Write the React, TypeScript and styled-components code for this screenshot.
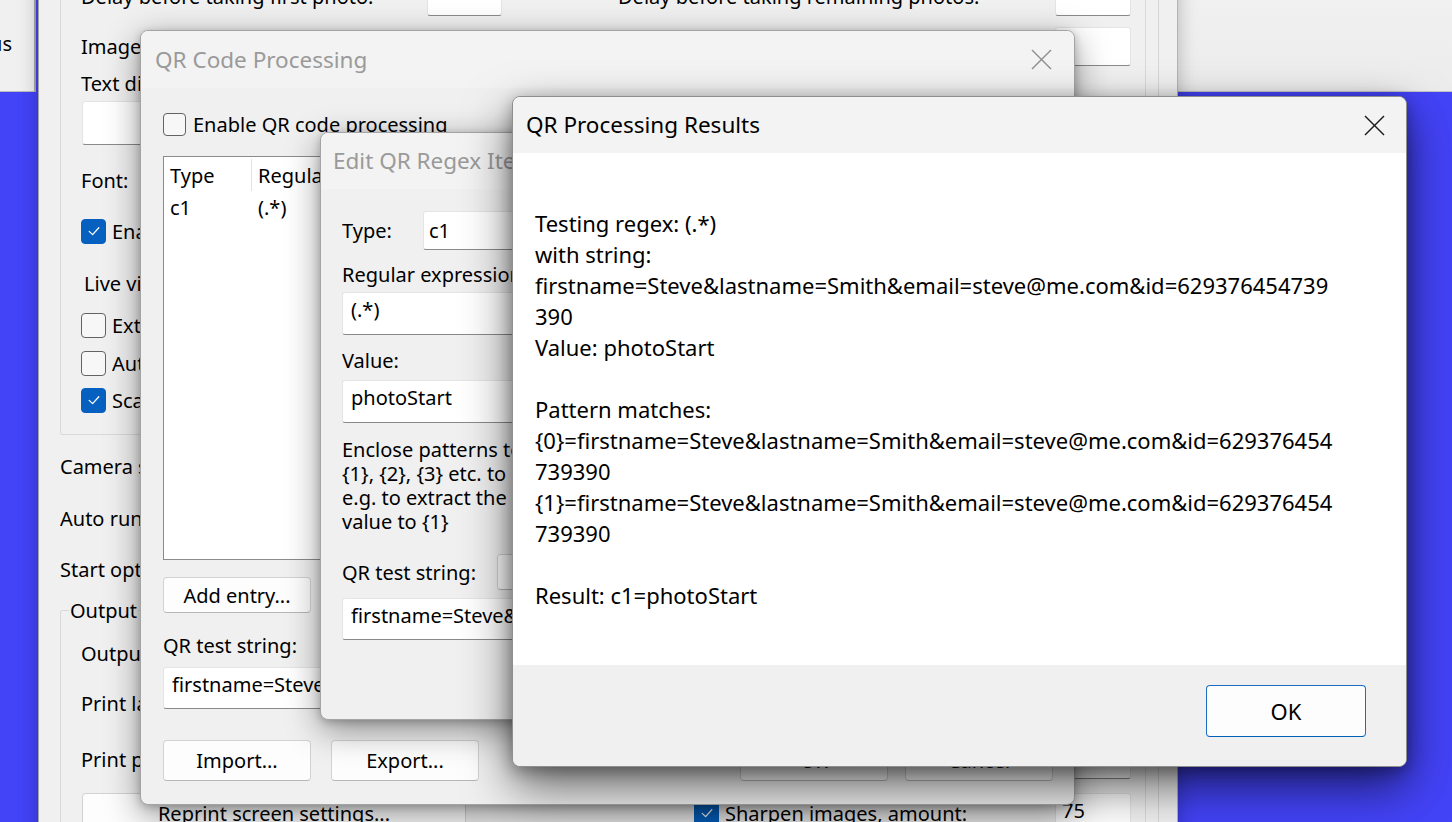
import React from "react";
import styled, { createGlobalStyle } from "styled-components";

const GlobalStyle = createGlobalStyle`
  html, body, #root { margin: 0; padding: 0; }
  body {
    width: 1452px;
    height: 822px;
    overflow: hidden;
    background: #4343f8;
    font-family: "Noto Sans", "Open Sans", sans-serif;
  }
  *, *::before, *::after { box-sizing: border-box; }
`;

const Desktop = styled.div`
  position: relative;
  width: 1452px;
  height: 822px;
  overflow: hidden;
  background: #4343f8;
  font-family: "Noto Sans", "Open Sans", sans-serif;
  font-size: 20px;
  line-height: 27px;
  color: #000;
`;

/* ---------- background windows ---------- */

const LeftWindow = styled.div`
  position: absolute;
  left: -300px;
  top: -10px;
  width: 336px;
  height: 102px;
  z-index: 1;
  display: flex;
  justify-content: flex-end;
  padding: 40px 22px 0 0;
  background: #f0f0f0;
  border-right: 2px solid #a9a9a9;
  border-bottom: 1px solid #bcbcbc;
`;

const RightWindow = styled.div`
  position: absolute;
  left: 1176px;
  top: -10px;
  width: 276px;
  height: 102px;
  z-index: 1;
  background: linear-gradient(180deg, #f1f1f1 0%, #ececec 100%);
  border-left: 2px solid #9d9d9d;
  border-bottom: 1px solid #c4c4c4;
`;

const SettingsWindow = styled.div`
  position: absolute;
  left: 38px;
  top: -40px;
  width: 1140px;
  height: 900px;
  z-index: 2;
  background: #f0f0f0;
  border-left: 1px solid #a3a3a3;
  border-right: 1px solid #b3b3b3;
  box-shadow: 0 0 18px rgba(0, 0, 0, 0.25);
`;

const SettingsPanel = styled.div`
  width: 1120px;
  height: 100%;
  display: flex;
  flex-direction: column;
  padding: 6px 0 0 21px;
  border-right: 1px solid #d6d6d6;
`;

const GroupBox = styled.div`
  width: 1086px;
  flex-shrink: 0;
  display: flex;
  flex-direction: column;
  padding: 9px 14px 21px 20px;
  border: 1px solid #d9d9d9;
  border-radius: 2px;
`;

const OutputGroup = styled.fieldset`
  width: 1086px;
  min-width: 0;
  flex-shrink: 0;
  margin: 10px 0 0 0;
  padding: 0 14px 0 8px;
  border: 1px solid #d9d9d9;
  border-radius: 2px;
`;

const Legend = styled.legend`
  padding: 0 1px;
  font-size: 20px;
  line-height: 27px;
`;

const GroupInner = styled.div`
  display: flex;
  flex-direction: column;
  padding-left: 12px;
`;

/* ---------- generic parts ---------- */

const Row = styled.div<{ $h: number; $mt?: number; $pl?: number; $align?: string }>`
  display: flex;
  align-items: ${(p) => p.$align ?? "center"};
  height: ${(p) => p.$h}px;
  margin-top: ${(p) => p.$mt ?? 0}px;
  padding-left: ${(p) => p.$pl ?? 0}px;
  flex-shrink: 0;
  white-space: nowrap;
`;

const Label = styled.span<{ $w?: number; $ml?: number; $pb?: number }>`
  width: ${(p) => (p.$w ? `${p.$w}px` : "auto")};
  margin-left: ${(p) => p.$ml ?? 0}px;
  padding-bottom: ${(p) => p.$pb ?? 0}px;
  flex-shrink: 0;
  white-space: nowrap;
  overflow: hidden;
`;

const Spacer = styled.div`
  flex: 1;
`;

const Edit = styled.div<{ $w?: number; $h: number; $top?: boolean; $ml?: number; $mt?: number; $pl?: number }>`
  width: ${(p) => (p.$w ? `${p.$w}px` : "100%")};
  height: ${(p) => p.$h}px;
  margin-left: ${(p) => p.$ml ?? 0}px;
  margin-top: ${(p) => p.$mt ?? 0}px;
  flex-shrink: 0;
  display: flex;
  align-items: ${(p) => (p.$top ? "flex-start" : "center")};
  padding: ${(p) => (p.$top ? `3px 8px 0 ${p.$pl ?? 8}px` : `0 8px 0 ${p.$pl ?? 8}px`)};
  background: #ffffff;
  border: 1px solid #e4e4e4;
  border-bottom-color: #8a8a8a;
  border-radius: 3px;
  white-space: nowrap;
  overflow: hidden;
`;

const PushButton = styled.button<{ $w: number; $h: number; $fs?: number; $default?: boolean; $ml?: number }>`
  width: ${(p) => p.$w}px;
  height: ${(p) => p.$h}px;
  margin-left: ${(p) => p.$ml ?? 0}px;
  flex-shrink: 0;
  padding: 0;
  display: flex;
  align-items: center;
  justify-content: center;
  font-family: inherit;
  font-size: ${(p) => p.$fs ?? 20}px;
  line-height: 27px;
  color: #000;
  background: #fdfdfd;
  border: 1px solid ${(p) => (p.$default ? "#1a6fc4" : "#d2d2d2")};
  border-bottom-color: ${(p) => (p.$default ? "#005fb8" : "#b7b7b7")};
  border-radius: 4px;
  white-space: nowrap;
`;

const CheckBox = styled.span<{ $on?: boolean; $size: number; $gap: number; $ml?: number }>`
  width: ${(p) => p.$size}px;
  height: ${(p) => p.$size}px;
  margin-right: ${(p) => p.$gap}px;
  margin-left: ${(p) => p.$ml ?? 0}px;
  flex-shrink: 0;
  display: inline-flex;
  align-items: center;
  justify-content: center;
  border-radius: 4px;
  background: ${(p) => (p.$on ? "#0560c0" : "#f7f7f7")};
  border: ${(p) => (p.$on ? "1px solid #0560c0" : "1.5px solid #636363")};
`;

const CheckMark = () => (
  <svg width="16" height="16" viewBox="0 0 16 16" fill="none">
    <polyline points="3.2,8.4 6.6,11.6 12.8,4.8" stroke="#ffffff" strokeWidth="1.3" strokeLinecap="round" strokeLinejoin="round" />
  </svg>
);

const CloseGlyph = ({ color }: { color: string }) => (
  <svg width="21" height="21" viewBox="0 0 21 21" fill="none">
    <line x1="1" y1="1" x2="20" y2="20" stroke={color} strokeWidth="1.4" />
    <line x1="20" y1="1" x2="1" y2="20" stroke={color} strokeWidth="1.4" />
  </svg>
);

/* ---------- dialogs ---------- */

const Dialog = styled.div<{ $x: number; $y: number; $w: number; $h: number; $z: number; $active?: boolean }>`
  position: absolute;
  left: ${(p) => p.$x}px;
  top: ${(p) => p.$y}px;
  width: ${(p) => p.$w}px;
  height: ${(p) => p.$h}px;
  z-index: ${(p) => p.$z};
  display: flex;
  flex-direction: column;
  overflow: hidden;
  background: #f0f0f0;
  border: 1px solid ${(p) => (p.$active ? "#8e8e8e" : "#a4a4a4")};
  border-radius: 8px;
  box-shadow: ${(p) =>
    p.$active
      ? "0 20px 48px rgba(0,0,0,0.58), 0 4px 16px rgba(0,0,0,0.32)"
      : "0 10px 34px rgba(0,0,0,0.42), 0 2px 8px rgba(0,0,0,0.22)"};
`;

const TitleBar = styled.div<{ $h: number; $pl: number; $active?: boolean }>`
  height: ${(p) => p.$h}px;
  flex-shrink: 0;
  display: flex;
  align-items: center;
  padding-left: ${(p) => p.$pl}px;
  background: #f3f3f3;
  color: ${(p) => (p.$active ? "#000000" : "#9a9a9a")};
  font-size: 22.5px;
  line-height: 30px;
  white-space: nowrap;
`;

const CloseBox = styled.div<{ $w: number }>`
  width: ${(p) => p.$w}px;
  height: 100%;
  margin-left: auto;
  display: flex;
  align-items: center;
  justify-content: center;
  flex-shrink: 0;
`;

const DialogBody = styled.div<{ $pad: string }>`
  flex: 1;
  display: flex;
  flex-direction: column;
  padding: ${(p) => p.$pad};
  min-height: 0;
`;

const ListView = styled.div`
  height: 404px;
  margin-top: 20px;
  flex-shrink: 0;
  display: flex;
  flex-direction: column;
  background: #ffffff;
  border: 1px solid #8b8b8b;
`;

const ListRow = styled.div<{ $h: number }>`
  display: grid;
  grid-template-columns: 88px 250px 1fr;
  height: ${(p) => p.$h}px;
  align-items: center;
`;

const HeaderCell = styled.div<{ $sep?: boolean }>`
  height: 32px;
  display: flex;
  align-items: center;
  padding-left: 6px;
  border-right: ${(p) => (p.$sep ? "1px solid #e3e3e3" : "none")};
  white-space: nowrap;
`;

const Cell = styled.div`
  padding-left: 6px;
  white-space: nowrap;
`;

const HelpText = styled.div`
  margin-top: 15px;
  font-size: 20px;
  line-height: 24px;
  white-space: pre;
  flex-shrink: 0;
`;

const ResultBody = styled.div`
  height: 512px;
  flex-shrink: 0;
  padding: 55px 22px 0 22px;
  background: #ffffff;
  font-size: 22px;
  line-height: 31px;
  white-space: pre;
`;

const ResultFooter = styled.div`
  flex: 1;
  display: flex;
  justify-content: flex-end;
  align-items: flex-start;
  padding: 20px 40px 0 0;
  background: #f0f0f0;
`;

const resultLines = [
  "Testing regex: (.*)",
  "with string:",
  "firstname=Steve&lastname=Smith&email=steve@me.com&id=629376454739",
  "390",
  "Value: photoStart",
  "",
  "Pattern matches:",
  "{0}=firstname=Steve&lastname=Smith&email=steve@me.com&id=629376454",
  "739390",
  "{1}=firstname=Steve&lastname=Smith&email=steve@me.com&id=629376454",
  "739390",
  "",
  "Result: c1=photoStart",
];

const helpLines = [
  "Enclose patterns to extract in brackets ( ) then use",
  "{1}, {2}, {3} etc. to insert them in the value,",
  "e.g. to extract the id use id=(\\d+) and set the",
  "value to {1}",
];

export default function App() {
  return (
    <Desktop>
      <GlobalStyle />

      <LeftWindow>Status</LeftWindow>
      <RightWindow />

      <SettingsWindow>
        <SettingsPanel>
          <GroupBox>
            <Row $h={40}>
              <Label $w={346}>Delay before taking first photo:</Label>
              <Edit $w={75} $h={40} />
              <Label $w={437} $ml={116}>Delay before taking remaining photos:</Label>
              <Edit $w={76} $h={40} />
            </Row>
            <Row $h={39} $mt={11}>
              <Label>Image folder:</Label>
              <Spacer />
              <Edit $w={76} $h={39} />
            </Row>
            <Row $h={22} $mt={6}>
              <Label>Text display:</Label>
            </Row>
            <Row $h={44} $mt={7} $pl={1}>
              <Edit $h={44} />
            </Row>
            <Row $h={34} $mt={18}>
              <Label>Font:</Label>
            </Row>
            <Row $h={26} $mt={21}>
              <CheckBox $on $size={25} $gap={6}>
                <CheckMark />
              </CheckBox>
              <Label>Enable text overlay</Label>
            </Row>
            <Row $h={24} $mt={27} $pl={3}>
              <Label>Live view options:</Label>
            </Row>
            <Row $h={26} $mt={17}>
              <CheckBox $size={25} $gap={6} />
              <Label>Extend live view to full screen</Label>
            </Row>
            <Row $h={26} $mt={12}>
              <CheckBox $size={25} $gap={6} />
              <Label>Auto start live view</Label>
            </Row>
            <Row $h={26} $mt={11}>
              <CheckBox $on $size={25} $gap={6}>
                <CheckMark />
              </CheckBox>
              <Label>Scale live view to fit</Label>
            </Row>
          </GroupBox>

          <Row $h={36} $mt={13}>
            <Label>Camera settings:</Label>
          </Row>
          <Row $h={36} $mt={16}>
            <Label>Auto run program:</Label>
          </Row>
          <Row $h={36} $mt={15}>
            <Label>Start options:</Label>
          </Row>

          <OutputGroup>
            <Legend>Output</Legend>
            <GroupInner>
              <Row $h={32} $mt={13}>
                <Label>Output folder:</Label>
              </Row>
              <Row $h={32} $mt={18}>
                <Label>Print layout:</Label>
              </Row>
              <Row $h={52} $mt={8} $align="flex-end">
                <Label $pb={6}>Print preview:</Label>
                <Spacer />
                <Edit $w={76} $h={52} />
              </Row>
              <Row $h={40} $mt={14}>
                <PushButton $w={384} $h={40} $ml={1}>
                  Reprint screen settings...
                </PushButton>
                <CheckBox $on $size={25} $gap={6} $ml={228}>
                  <CheckMark />
                </CheckBox>
                <Label>Sharpen images, amount:</Label>
                <Spacer />
                <Edit $w={76} $h={40} $top $pl={6}>
                  75
                </Edit>
              </Row>
            </GroupInner>
          </OutputGroup>
        </SettingsPanel>
      </SettingsWindow>

      {/* QR Code Processing */}
      <Dialog $x={140} $y={30} $w={935} $h={775} $z={3}>
        <TitleBar $h={57} $pl={14}>
          QR Code Processing
          <CloseBox $w={66}>
            <CloseGlyph color="#8f8f8f" />
          </CloseBox>
        </TitleBar>
        <DialogBody $pad="0 21px 0 22px">
          <Row $h={23} $mt={25}>
            <CheckBox $size={23} $gap={7} />
            <Label>Enable QR code processing</Label>
          </Row>
          <ListView>
            <ListRow $h={36}>
              <HeaderCell $sep>Type</HeaderCell>
              <HeaderCell $sep>Regular expression</HeaderCell>
              <HeaderCell>Value</HeaderCell>
            </ListRow>
            <ListRow $h={28}>
              <Cell>c1</Cell>
              <Cell>(.*)</Cell>
              <Cell>photoStart</Cell>
            </ListRow>
          </ListView>
          <Row $h={36} $mt={17}>
            <PushButton $w={148} $h={36}>
              Add entry...
            </PushButton>
          </Row>
          <Row $h={27} $mt={19}>
            <Label>QR test string:</Label>
          </Row>
          <Edit $h={42} $top $mt={8}>
            firstname=Steve&amp;lastname=Smith&amp;email=steve@me.com&amp;id=629376454739390
          </Edit>
          <Row $h={41} $mt={31}>
            <PushButton $w={148} $h={41}>
              Import...
            </PushButton>
            <PushButton $w={148} $h={41} $ml={20}>
              Export...
            </PushButton>
            <Spacer />
            <PushButton $w={148} $h={41}>
              OK
            </PushButton>
            <PushButton $w={148} $h={41} $ml={17}>
              Cancel
            </PushButton>
          </Row>
        </DialogBody>
      </Dialog>

      {/* Edit QR Regex Item */}
      <Dialog $x={320} $y={132} $w={560} $h={588} $z={4}>
        <TitleBar $h={56} $pl={12}>
          Edit QR Regex Item
          <CloseBox $w={66}>
            <CloseGlyph color="#8f8f8f" />
          </CloseBox>
        </TitleBar>
        <DialogBody $pad="0 21px 0 21px">
          <Row $h={39} $mt={22}>
            <Label $w={81}>Type:</Label>
            <Edit $w={300} $h={39} $pl={5}>
              c1
            </Edit>
          </Row>
          <Row $h={27} $mt={11}>
            <Label>Regular expression:</Label>
          </Row>
          <Edit $h={43} $top $mt={4}>
            (.*)
          </Edit>
          <Row $h={27} $mt={12}>
            <Label>Value:</Label>
          </Row>
          <Edit $h={43} $top $mt={6}>
            photoStart
          </Edit>
          <HelpText>{helpLines.join("\n")}</HelpText>
          <Row $h={36} $mt={20}>
            <Label $w={155}>QR test string:</Label>
            <PushButton $w={110} $h={36}>
              Test
            </PushButton>
          </Row>
          <Edit $h={42} $top $mt={8}>
            firstname=Steve&amp;lastname=Smith&amp;email=steve@me.com
          </Edit>
        </DialogBody>
      </Dialog>

      {/* QR Processing Results */}
      <Dialog $x={512} $y={96} $w={895} $h={671} $z={5} $active>
        <TitleBar $h={56} $pl={13} $active>
          QR Processing Results
          <CloseBox $w={64}>
            <CloseGlyph color="#1a1a1a" />
          </CloseBox>
        </TitleBar>
        <ResultBody>{resultLines.join("\n")}</ResultBody>
        <ResultFooter>
          <PushButton $w={160} $h={52} $fs={22} $default>
            OK
          </PushButton>
        </ResultFooter>
      </Dialog>
    </Desktop>
  );
}
